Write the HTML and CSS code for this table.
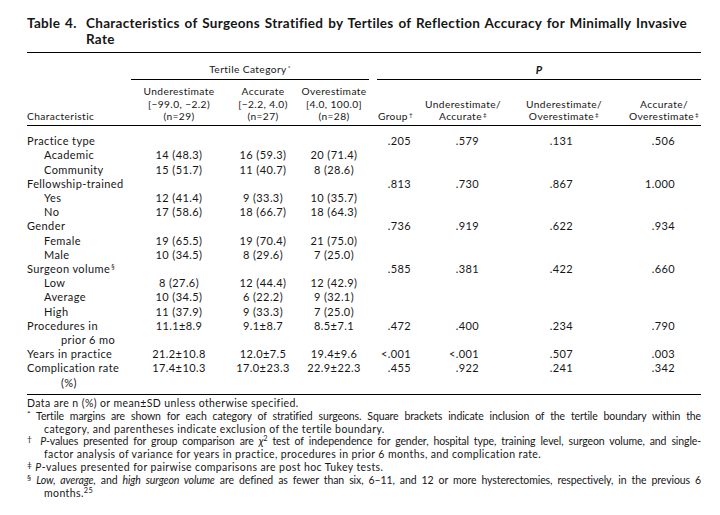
FILE: index.html
```html
<!DOCTYPE html>
<html lang="en">
<head>
    <meta charset="UTF-8">
    <meta name="viewport" content="width=device-width, initial-scale=1.0">
    <title>Table 4</title>
    <link rel="stylesheet" href="styles.css">
</head>
<body>
    <div class="sheet">
        <div class="caption">
            <span class="caption-label">Table 4.</span>
            <span class="caption-text">Characteristics of Surgeons Stratified by Tertiles of Reflection Accuracy for Minimally Invasive<br>Rate</span>
        </div>

        <table class="data">
            <colgroup>
                <col style="width: 104px">
                <col style="width: 96px">
                <col style="width: 72px">
                <col style="width: 70px">
                <col style="width: 46px">
                <col style="width: 96px">
                <col style="width: 106px">
                <col style="width: 84px">
            </colgroup>
            <thead>
                <tr class="group-row">
                    <th></th>
                    <th colspan="3"><span class="span-head">Tertile Category<span class="mark">*</span></span></th>
                    <th colspan="4"><span class="span-head p-head">P</span></th>
                </tr>
                <tr class="col-row">
                    <th class="char-head">Characteristic</th>
                    <th>Underestimate<br>[−99.0, −2.2)<br>(n=29)</th>
                    <th>Accurate<br>[−2.2, 4.0)<br>(n=27)</th>
                    <th>Overestimate<br>[4.0, 100.0]<br>(n=28)</th>
                    <th class="p-group">Group<span class="mark">†</span></th>
                    <th>Underestimate/<br>Accurate<span class="mark">‡</span></th>
                    <th>Underestimate/<br>Overestimate<span class="mark">‡</span></th>
                    <th class="p-last">Accurate/<br>Overestimate<span class="mark">‡</span></th>
                </tr>
            </thead>
            <tbody>
                <tr>
                    <td>Practice type</td><td></td><td></td><td></td>
                    <td class="pv pv-1">.205</td><td class="pv pv-2">.579</td><td class="pv pv-3">.131</td><td class="pv pv-4">.506</td>
                </tr>
                <tr>
                    <td class="sub">Academic</td><td>14 (48.3)</td><td>16 (59.3)</td><td>20 (71.4)</td>
                    <td></td><td></td><td></td><td></td>
                </tr>
                <tr>
                    <td class="sub">Community</td><td>15 (51.7)</td><td>11 (40.7)</td><td>8 (28.6)</td>
                    <td></td><td></td><td></td><td></td>
                </tr>
                <tr>
                    <td>Fellowship-trained</td><td></td><td></td><td></td>
                    <td class="pv pv-1">.813</td><td class="pv pv-2">.730</td><td class="pv pv-3">.867</td><td class="pv pv-4">1.000</td>
                </tr>
                <tr>
                    <td class="sub">Yes</td><td>12 (41.4)</td><td>9 (33.3)</td><td>10 (35.7)</td>
                    <td></td><td></td><td></td><td></td>
                </tr>
                <tr>
                    <td class="sub">No</td><td>17 (58.6)</td><td>18 (66.7)</td><td>18 (64.3)</td>
                    <td></td><td></td><td></td><td></td>
                </tr>
                <tr>
                    <td>Gender</td><td></td><td></td><td></td>
                    <td class="pv pv-1">.736</td><td class="pv pv-2">.919</td><td class="pv pv-3">.622</td><td class="pv pv-4">.934</td>
                </tr>
                <tr>
                    <td class="sub">Female</td><td>19 (65.5)</td><td>19 (70.4)</td><td>21 (75.0)</td>
                    <td></td><td></td><td></td><td></td>
                </tr>
                <tr>
                    <td class="sub">Male</td><td>10 (34.5)</td><td>8 (29.6)</td><td>7 (25.0)</td>
                    <td></td><td></td><td></td><td></td>
                </tr>
                <tr>
                    <td>Surgeon volume<span class="mark">§</span></td><td></td><td></td><td></td>
                    <td class="pv pv-1">.585</td><td class="pv pv-2">.381</td><td class="pv pv-3">.422</td><td class="pv pv-4">.660</td>
                </tr>
                <tr>
                    <td class="sub">Low</td><td>8 (27.6)</td><td>12 (44.4)</td><td>12 (42.9)</td>
                    <td></td><td></td><td></td><td></td>
                </tr>
                <tr>
                    <td class="sub">Average</td><td>10 (34.5)</td><td>6 (22.2)</td><td>9 (32.1)</td>
                    <td></td><td></td><td></td><td></td>
                </tr>
                <tr>
                    <td class="sub">High</td><td>11 (37.9)</td><td>9 (33.3)</td><td>7 (25.0)</td>
                    <td></td><td></td><td></td><td></td>
                </tr>
                <tr>
                    <td class="wrap">Procedures in<br>prior 6 mo</td><td>11.1±8.9</td><td>9.1±8.7</td><td>8.5±7.1</td>
                    <td class="pv pv-1">.472</td><td class="pv pv-2">.400</td><td class="pv pv-3">.234</td><td class="pv pv-4">.790</td>
                </tr>
                <tr>
                    <td>Years in practice</td><td>21.2±10.8</td><td>12.0±7.5</td><td>19.4±9.6</td>
                    <td class="pv pv-1">&lt;.001</td><td class="pv pv-2">&lt;.001</td><td class="pv pv-3">.507</td><td class="pv pv-4">.003</td>
                </tr>
                <tr>
                    <td class="wrap">Complication rate<br>(%)</td><td>17.4±10.3</td><td>17.0±23.3</td><td>22.9±22.3</td>
                    <td class="pv pv-1">.455</td><td class="pv pv-2">.922</td><td class="pv pv-3">.241</td><td class="pv pv-4">.342</td>
                </tr>
            </tbody>
        </table>

        <div class="notes">
            <p class="note"><span class="line">Data are n (%) or mean±SD unless otherwise specified.</span></p>
            <p class="note">
                <span class="line full"><span class="sym">*</span> Tertile margins are shown for each category of stratified surgeons. Square brackets indicate inclusion of the tertile boundary within the</span>
                <span class="line">category, and parentheses indicate exclusion of the tertile boundary.</span>
            </p>
            <p class="note">
                <span class="line full"><span class="sym">†</span> <i>P</i>-values presented for group comparison are <i>χ</i><sup class="exp">2</sup> test of independence for gender, hospital type, training level, surgeon volume, and single-</span>
                <span class="line">factor analysis of variance for years in practice, procedures in prior 6 months, and complication rate.</span>
            </p>
            <p class="note"><span class="line"><span class="sym">‡</span> <i>P</i>-values presented for pairwise comparisons are post hoc Tukey tests.</span></p>
            <p class="note">
                <span class="line full"><span class="sym">§</span> <i>Low, average,</i> and <i>high surgeon volume</i> are defined as fewer than six, 6–11, and 12 or more hysterectomies, respectively, in the previous 6</span>
                <span class="line">months.<sup class="exp">25</sup></span>
            </p>
        </div>
    </div>
</body>
</html>
```

FILE: styles.css
```css
body {
    margin: 0;
    background: #fff;
    color: #161616;
    font-family: Lato, "Liberation Sans", sans-serif;
}
.sheet {
    width: 674px;
    padding: 15px 0 0 27px;
}
.caption {
    display: flex;
    font-size: 13.5px;
    font-weight: 700;
    line-height: 16px;
    letter-spacing: 0.3px;
    word-spacing: 1.3px;
}
.caption-label {
    flex: 0 0 59px;
}
.mark {
    font-size: 0.62em;
    line-height: 0;
    vertical-align: 0.5em;
    margin-left: 1px;
}

/* table */
.data {
    width: 674px;
    margin-top: 5px;
    border-collapse: collapse;
    table-layout: fixed;
    font-size: 11px;
    letter-spacing: 0.4px;
}
.data th {
    font-size: 10.2px;
    font-weight: normal;
    padding: 0;
}
.group-row th {
    border-top: 1px solid #000;
    padding-top: 10px;
    line-height: 13px;
}
.span-head {
    display: block;
    padding-bottom: 3px;
    border-bottom: 1px solid #000;
}
.p-head {
    margin-left: 8px;
    font-size: 11px;
    font-style: italic;
    font-weight: 700;
}
.col-row th {
    padding: 5px 0 2px;
    line-height: 12.7px;
    vertical-align: bottom;
    border-bottom: 1px solid #000;
}
.col-row .char-head {
    text-align: left;
}
.col-row .p-group {
    text-align: right;
    padding-right: 2px;
}
.col-row .p-last {
    padding-left: 10px;
}
.data td {
    padding: 0;
    line-height: 14.2px;
    vertical-align: top;
    text-align: center;
    white-space: nowrap;
}
.data td:first-child {
    text-align: left;
}
.data td.sub {
    padding-left: 17px;
}
.data td.wrap {
    padding-left: 34px;
    text-indent: -34px;
}
.data td.pv {
    text-align: right;
}
.data td.pv-1 { padding-right: 4px; }
.data td.pv-2 { padding-right: 32px; }
.data td.pv-3 { padding-right: 44px; }
.data td.pv-4 { padding-right: 26px; }
.data tbody tr:first-child td {
    padding-top: 8px;
}
.data tbody tr:last-child td {
    padding-bottom: 4px;
    border-bottom: 1px solid #000;
}

/* footnotes */
.notes {
    margin-top: 2px;
    font-size: 10.5px;
    line-height: 12.9px;
    letter-spacing: 0.4px;
}
.note {
    margin: 0;
}
.note .line {
    display: block;
    padding-left: 17px;
    white-space: nowrap;
}
.note .line:first-child {
    padding-left: 0;
}
.note .full {
    letter-spacing: -0.1px;
    word-spacing: -1px;
    text-align: justify;
    text-align-last: justify;
    white-space: normal;
}
.sym {
    font-size: 0.8em;
    vertical-align: 0.3em;
    line-height: 0;
}
.exp {
    font-size: 0.7em;
    line-height: 0;
}
```
